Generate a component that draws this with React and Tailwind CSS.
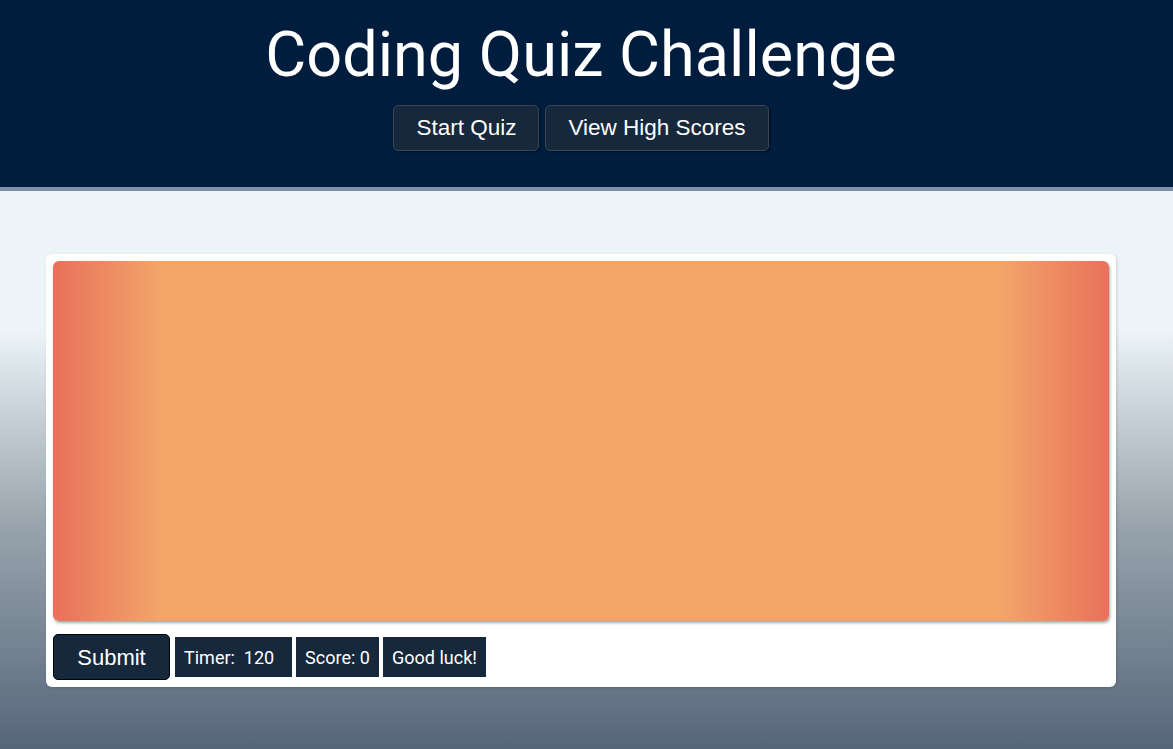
import React from "react";

export default function App() {
  return (
    <div className="min-h-[749px] flex flex-col bg-[linear-gradient(to_bottom,#ecf4f8_0px,#ecf4f8_330px,#9aa5ae_520px,#56667a_749px)]">
      {/* header */}
      <header className="h-[191px] bg-[#001d3d] border-b-4 border-[#7d8fa9] pr-[11px] flex flex-col items-center">
        <h1 className="mt-[17px] text-[63px] leading-[76px] text-white font-['Roboto',sans-serif]">
          Coding Quiz Challenge
        </h1>
        <div className="mt-[12px] flex gap-[6px] font-['Liberation_Sans',Arial,sans-serif]">
          <button className="h-[46px] px-[22px] bg-[#16283c] text-white text-[22.5px] rounded-[5px] border border-[#3a4656] shadow-[1px_1px_2px_rgba(0,0,0,0.5)]">
            Start Quiz
          </button>
          <button className="h-[46px] px-[22px] bg-[#16283c] text-white text-[22.5px] rounded-[5px] border border-[#3a4656] shadow-[1px_1px_2px_rgba(0,0,0,0.5)]">
            View High Scores
          </button>
        </div>
      </header>

      {/* quiz card */}
      <main className="px-[46px] pt-[63px] w-full">
        <div className="w-[1070px] bg-white rounded-[6px] p-[7px] shadow-[1px_1px_3px_rgba(0,0,0,0.15)]">
          <div className="h-[360px] rounded-[6px] bg-[linear-gradient(to_right,#e8715a_0%,#f2a469_10%,#f2a469_90%,#e8715a_100%)] shadow-[1px_2px_3px_rgba(0,0,0,0.35)]"></div>
          <div className="mt-[13px] flex items-center gap-[4px]">
            <button className="h-[46px] w-[117px] bg-[#16283c] text-white text-[22px] rounded-[5px] border border-black font-['Liberation_Sans',Arial,sans-serif]">
              Submit
            </button>
            <div className="flex gap-[4px] ml-[1px] font-['Roboto',sans-serif] text-[18px] text-white">
              <div className="h-[40px] w-[117px] bg-[#16283c] flex items-center pl-[9px] whitespace-pre">Timer:  120</div>
              <div className="h-[40px] w-[83px] bg-[#16283c] flex items-center justify-center">Score: 0</div>
              <div className="h-[40px] w-[103px] bg-[#16283c] flex items-center justify-center">Good luck!</div>
            </div>
          </div>
        </div>
      </main>
    </div>
  );
}
